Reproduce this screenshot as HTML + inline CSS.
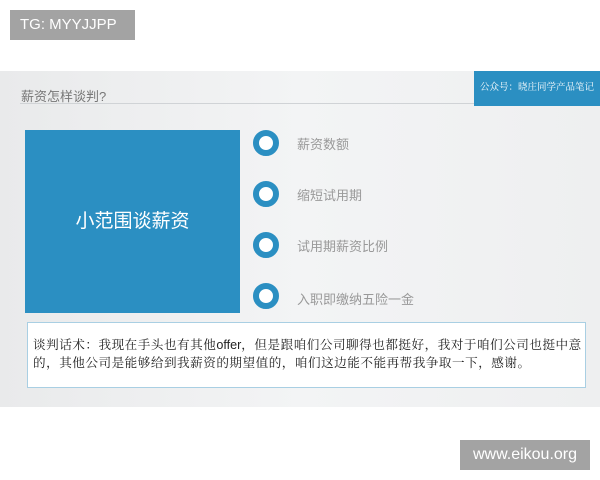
<!DOCTYPE html>
<html><head><meta charset="utf-8"><style>
*{margin:0;padding:0;box-sizing:border-box}
body{width:600px;height:480px;background:#fff;position:relative;overflow:hidden;font-family:"Liberation Sans","Noto Sans CJK SC",sans-serif}
.a{position:absolute}
.slide{left:0;top:71px;width:600px;height:336px;background:linear-gradient(90deg,#e9eaeb,#f3f4f5 50%,#eeeff0)}
.circ{width:26px;height:26px;border-radius:50%;border:6px solid #2b8fc2;background:#fff;left:253px}
.lbl{left:297px;font-size:13px;color:#999}
</style></head><body>
<div class="a" style="left:10px;top:10px;width:125px;height:30px;background:#a3a3a3;color:#fff;font-size:15px;line-height:30px;padding-left:10px">TG: MYYJJPP</div>
<div class="a slide"></div>
<div class="a" style="left:21px;top:86px;font-size:13px;color:#777">薪资怎样谈判?</div>
<div class="a" style="left:20px;top:103px;width:454px;height:1px;background:#d0d3d6"></div>
<div class="a" style="left:474px;top:71px;width:126px;height:35px;background:#2b8fc2;color:#fff;font-size:9.5px;line-height:35px;text-align:center;font-family:'Liberation Serif','Noto Serif CJK SC',serif">公众号：晓庄同学产品笔记</div>
<div class="a" style="left:25px;top:130px;width:215px;height:183px;background:#2b8fc2;color:#fff;font-size:19px;line-height:183px;text-align:center">小范围谈薪资</div>
<div class="a circ" style="top:130px"></div><div class="a lbl" style="top:134px">薪资数额</div>
<div class="a circ" style="top:181px"></div><div class="a lbl" style="top:185px">缩短试用期</div>
<div class="a circ" style="top:232px"></div><div class="a lbl" style="top:236px">试用期薪资比例</div>
<div class="a circ" style="top:283px"></div><div class="a lbl" style="top:289px">入职即缴纳五险一金</div>
<div class="a" style="left:27px;top:322px;width:559px;height:66px;background:#fff;border:1px solid #a9cfe3;padding:13px 0 0 5px;font-size:12.6px;line-height:18px;color:#222;font-family:'Liberation Serif','Noto Serif CJK SC',serif;letter-spacing:0.5px;white-space:nowrap;overflow:hidden">谈判话术：我现在手头也有其他<span style="font-family:'Liberation Sans',sans-serif;letter-spacing:0">offer</span>，但是跟咱们公司聊得也都挺好，我对于咱们公司也挺中意<br>的，其他公司是能够给到我薪资的期望值的，咱们这边能不能再帮我争取一下，感谢。</div>
<div class="a" style="left:460px;top:440px;width:130px;height:30px;background:#a3a3a3;color:#fff;font-size:16px;line-height:30px;text-align:center">www.eikou.org</div>
</body></html>
